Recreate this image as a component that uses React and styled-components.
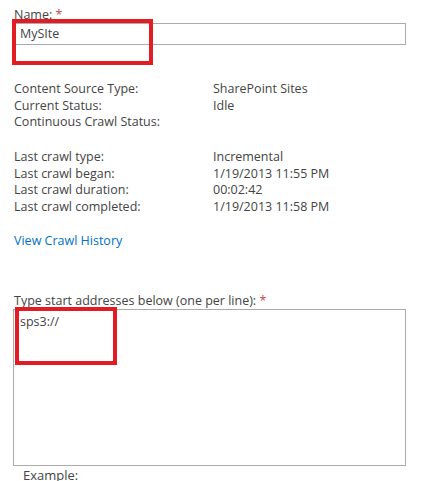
import React from 'react'
import styled, { createGlobalStyle } from 'styled-components'

const GlobalStyle = createGlobalStyle`
    html, body {
        margin: 0;
        padding: 0;
        background: #fff;
    }
    body {
        font-family: "Open Sans", "Noto Sans", sans-serif;
        color: #444;
    }
`

const crawlInfo = [
    [
        ['Content Source Type:', 'SharePoint Sites'],
        ['Current Status:', 'Idle'],
        ['Continuous Crawl Status:', ''],
    ],
    [
        ['Last crawl type:', 'Incremental'],
        ['Last crawl began:', '1/19/2013 11:55 PM'],
        ['Last crawl duration:', '00:02:42'],
        ['Last crawl completed:', '1/19/2013 11:58 PM'],
    ],
]

function App() {
    return (
        <Page>
            <GlobalStyle />
            <Field>
                <Label>Name: <Required>*</Required></Label>
                <TextInput>MySIte</TextInput>
                <Highlight $top={13} $left={-1} $width={141} $height={46} />
            </Field>

            {crawlInfo.map((group, i) => (
                <InfoGroup key={i} $gap={i === 0 ? 35 : 18}>
                    {group.map(([label, value]) => (
                        <InfoRow key={label}>
                            <span>{label}</span>
                            <span>{value}</span>
                        </InfoRow>
                    ))}
                </InfoGroup>
            ))}

            <HistoryLink href="#">View Crawl History</HistoryLink>

            <Field $gap={43}>
                <Label>Type start addresses below (one per line): <Required>*</Required></Label>
                <AddressBox>sps3://</AddressBox>
                <Highlight $top={15} $left={2} $width={102} $height={58} />
            </Field>

            <Example>Example:</Example>
        </Page>
    )
}

const Page = styled.div`
    padding: 6px 16px 0 13px;
    width: 393px;
    font-size: 12.5px;
    line-height: 17px;
    height: 481px;
    overflow: hidden;
`

const Field = styled.div`
    position: relative;
    margin-top: ${props => props.$gap || 0}px;
`

const Label = styled.div`
    padding-left: 1px;
    height: 17px;
`

const Required = styled.span`
    color: #c0504d;
`

const TextInput = styled.div`
    box-sizing: border-box;
    height: 22px;
    border: 1px solid #ababab;
    padding: 1px 6px;
    line-height: 18px;
    color: #444;
`

const AddressBox = styled.div`
    box-sizing: border-box;
    height: 157px;
    border: 1px solid #ababab;
    padding: 3px 6px;
    line-height: 17px;
`

const Highlight = styled.div`
    position: absolute;
    top: ${props => props.$top}px;
    left: ${props => props.$left}px;
    width: ${props => props.$width}px;
    height: ${props => props.$height}px;
    border: 4px solid #e31b23;
    box-sizing: border-box;
    pointer-events: none;
`

const InfoGroup = styled.div`
    margin-top: ${props => props.$gap}px;
    padding-left: 1px;
`

const InfoRow = styled.div`
    display: grid;
    grid-template-columns: 199px 1fr;
    height: 16.7px;
`

const HistoryLink = styled.a`
    display: block;
    margin-top: 17px;
    padding-left: 1px;
    color: #0072c6;
    text-decoration: none;
`

const Example = styled.div`
    padding-left: 10px;
    margin-top: 1px;
    font-size: 13px;
`

export default App
